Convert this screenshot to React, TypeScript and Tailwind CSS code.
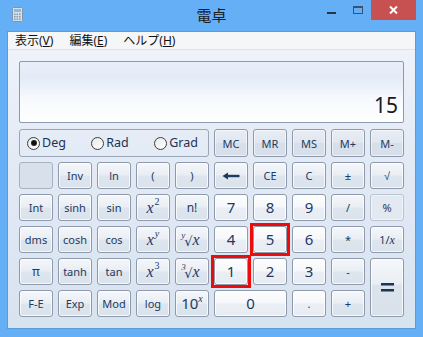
import React from 'react';

type Kind = 'fn' | 'mem' | 'num' | 'dis' | 'faded';

const kinds: Record<Kind, string> = {
  fn: "border-[#8e9aab] bg-[linear-gradient(180deg,#f4f7fa_0%,#e9eef4_48%,#dde5ee_52%,#dae2ec_100%)] shadow-[inset_0_0_0_1px_rgba(255,255,255,0.75)]",
  mem: "border-[#8e9aab] bg-[linear-gradient(180deg,#e8edf4_0%,#e0e7f0_48%,#d7e0ea_52%,#d6dfea_100%)] shadow-[inset_0_0_0_1px_rgba(255,255,255,0.55)]",
  num: "border-[#8e9aab] bg-[linear-gradient(180deg,#fdfdfe_0%,#f5f7fa_48%,#ebeff5_52%,#e7ecf2_100%)] shadow-[inset_0_0_0_1px_rgba(255,255,255,0.85)]",
  dis: "border-[#a7b1bf] bg-[#d8e1eb]",
  faded: "border-[#b9c3cf] bg-[#e3e9f1] shadow-[inset_0_0_0_1px_rgba(255,255,255,0.5)]",
};

function Btn({
  children,
  kind = 'fn',
  className = '',
  red = false,
}: {
  children?: React.ReactNode;
  kind?: Kind;
  className?: string;
  red?: boolean;
}) {
  return (
    <div
      className={`relative flex items-center justify-center rounded-[3px] border text-[#1d3a61] leading-none ${kinds[kind]} ${
        red ? 'z-10' : ''
      } ${className}`}
    >
      {children}
      {red && <div className="pointer-events-none absolute -inset-[4px] border-[3px] border-[#ee0b0b]" />}
    </div>
  );
}

const T = ({ children }: { children: React.ReactNode }) => (
  <span className="text-[11px] font-['Noto_Sans',sans-serif]">{children}</span>
);
const D = ({ children }: { children: React.ReactNode }) => (
  <span className="text-[15px] font-['Noto_Sans',sans-serif]">{children}</span>
);
const X = ({ children }: { children: React.ReactNode }) => (
  <span className="font-['Liberation_Serif',serif] italic text-[16px]">{children}</span>
);

function Pow({ base, exp, expItalic = false }: { base: React.ReactNode; exp: string; expItalic?: boolean }) {
  return (
    <span className="flex items-start">
      {base}
      <span className={`font-['Liberation_Serif',serif] text-[10px] -mt-[3px] ml-[1px] ${expItalic ? 'italic' : ''}`}>{exp}</span>
    </span>
  );
}

function Root({ idx }: { idx: string }) {
  return (
    <span className="flex items-end">
      <span className="relative font-['DejaVu_Sans',sans-serif] text-[13px]">
        <span className="absolute -left-[3px] -top-[4px] font-['Liberation_Serif',serif] italic text-[9px]">{idx}</span>
        √
      </span>
      <X>x</X>
    </span>
  );
}

function Radio({ label, checked = false }: { label: string; checked?: boolean }) {
  return (
    <div className="flex items-center gap-[2px]">
      <div className="flex h-[13px] w-[13px] items-center justify-center rounded-full border border-[#3c3c3c] bg-[linear-gradient(135deg,#e8e8e8,#ffffff)]">
        {checked && <div className="h-[6px] w-[6px] rounded-full bg-[radial-gradient(circle,#111_40%,#444_100%)]" />}
      </div>
      <span className="text-[12.5px] text-[#1d3354] font-['Noto_Sans',sans-serif]">{label}</span>
    </div>
  );
}

function CalcIcon() {
  return (
    <svg width="11" height="15" viewBox="0 0 11 15">
      <rect x="0.5" y="0.5" width="10" height="14" rx="1" fill="#d5e1ec" stroke="#7a97b5" />
      <rect x="2" y="2" width="7" height="3" fill="#8fb8dc" />
      {[0, 1, 2].map((r) =>
        [0, 1, 2].map((c) => (
          <rect key={`${r}${c}`} x={2 + c * 2.5} y={6.5 + r * 2.5} width="1.6" height="1.6" fill={c === 2 && r === 2 ? '#e08a3c' : '#8a9fb4'} />
        ))
      )}
    </svg>
  );
}

export default function App() {
  return (
    <div className="flex h-[337px] w-[423px] flex-col bg-[#64aff5] font-['Noto_Sans',sans-serif]">
      {/* title bar */}
      <div className="grid h-[31px] grid-cols-[1fr_auto_1fr]">
        <div className="flex items-start pl-[12px] pt-[7px]">
          <CalcIcon />
        </div>
        <div className="pt-[4px] text-[15px] text-[#1c1c1c] font-['Noto_Sans_CJK_JP',sans-serif]">電卓</div>
        <div className="flex items-start justify-end pr-[7px]">
          <div className="flex h-[20px] w-[26px] items-center justify-center">
            <div className="mt-[6px] h-[2px] w-[9px] bg-[#263646]" />
          </div>
          <div className="flex h-[20px] w-[27px] items-center justify-center">
            <div className="mb-[1px] h-[8px] w-[10px] border border-t-2 border-[#3b5170]" />
          </div>
          <div className="flex h-[20px] w-[45px] items-center justify-center bg-[#c75050]">
            <svg width="9" height="8" viewBox="0 0 9 8">
              <path d="M1 0.5 L8 7.5 M8 0.5 L1 7.5" stroke="#fff" strokeWidth="2" />
            </svg>
          </div>
        </div>
      </div>

      {/* client */}
      <div className="mx-[7px] mb-[8px] flex flex-1 flex-col border border-[#5a9bd9]">
        <div className="flex h-[18px] items-center gap-[16px] border-b border-[#dde2e8] bg-[#f5f6f8] pl-[7px] text-[12px] text-[#111] font-['Noto_Sans','Noto_Sans_CJK_JP',sans-serif]">
          <span>表示(<span className="underline">V</span>)</span>
          <span>編集(<span className="underline">E</span>)</span>
          <span>ヘルプ(<span className="underline">H</span>)</span>
        </div>
        <div className="flex flex-1 flex-col bg-[linear-gradient(180deg,#eef3fa_0%,#e2eaf5_40%,#d8e3f0_100%)] px-[11px] pt-[11px]">
          {/* display */}
          <div className="flex h-[62px] items-end justify-end rounded-[2px] border border-[#8d99ac] bg-[linear-gradient(180deg,#e9eff9_0%,#e3ebf7_25%,#f6f9fd_60%,#ffffff_100%)] pb-[6px] pr-[5px]">
            <span className="text-[21px] leading-none text-[#1a1a1a] font-['Noto_Sans',sans-serif]">15</span>
          </div>

          {/* keypad */}
          <div className="mt-[6px] grid grid-cols-[repeat(10,34px)] grid-rows-[28px_repeat(5,27px)] gap-x-[5px] gap-y-[5px]">
            <div className="col-span-5 flex items-center justify-between rounded-[3px] border border-[#9aa6b8] pl-[7px] pr-[10px]">
              <Radio label="Deg" checked />
              <Radio label="Rad" />
              <Radio label="Grad" />
            </div>
            <Btn kind="mem"><T>MC</T></Btn>
            <Btn kind="mem"><T>MR</T></Btn>
            <Btn kind="mem"><T>MS</T></Btn>
            <Btn kind="mem"><T>M+</T></Btn>
            <Btn kind="mem"><T>M-</T></Btn>

            {/* row 2 */}
            <Btn kind="dis" />
            <Btn><T>Inv</T></Btn>
            <Btn><T>ln</T></Btn>
            <Btn><T>(</T></Btn>
            <Btn><T>)</T></Btn>
            <Btn>
              <svg width="18" height="8" viewBox="0 0 18 8">
                <path d="M0.5 4 L6 0.5 L6 7.5 Z" fill="#1d3a61" />
                <rect x="5" y="2.8" width="12.5" height="2.4" fill="#1d3a61" />
              </svg>
            </Btn>
            <Btn><T>CE</T></Btn>
            <Btn><T>C</T></Btn>
            <Btn><T>±</T></Btn>
            <Btn><T>√</T></Btn>

            {/* row 3 */}
            <Btn><T>Int</T></Btn>
            <Btn><T>sinh</T></Btn>
            <Btn><T>sin</T></Btn>
            <Btn><Pow base={<X>x</X>} exp="2" /></Btn>
            <Btn><T><span className="text-[12px]">n!</span></T></Btn>
            <Btn kind="num"><D>7</D></Btn>
            <Btn kind="num"><D>8</D></Btn>
            <Btn kind="num"><D>9</D></Btn>
            <Btn><T>/</T></Btn>
            <Btn kind="faded"><T>%</T></Btn>

            {/* row 4 */}
            <Btn><T>dms</T></Btn>
            <Btn><T>cosh</T></Btn>
            <Btn><T>cos</T></Btn>
            <Btn><Pow base={<X>x</X>} exp="y" expItalic /></Btn>
            <Btn><Root idx="y" /></Btn>
            <Btn kind="num"><D>4</D></Btn>
            <Btn kind="num" red><D>5</D></Btn>
            <Btn kind="num"><D>6</D></Btn>
            <Btn><T>*</T></Btn>
            <Btn>
              <span className="flex items-center">
                <T>1/</T>
                <span className="font-['Liberation_Serif',serif] italic text-[12px]">x</span>
              </span>
            </Btn>

            {/* row 5 */}
            <Btn><T><span className="text-[12px]">π</span></T></Btn>
            <Btn><T>tanh</T></Btn>
            <Btn><T>tan</T></Btn>
            <Btn><Pow base={<X>x</X>} exp="3" /></Btn>
            <Btn><Root idx="3" /></Btn>
            <Btn kind="num" red><D>1</D></Btn>
            <Btn kind="num"><D>2</D></Btn>
            <Btn kind="num"><D>3</D></Btn>
            <Btn><T>-</T></Btn>
            <Btn className="row-span-2 bg-[linear-gradient(180deg,#f5f8fb_0%,#e9eef4_44%,#dbe3ed_46%,#d9e1eb_100%)]">
              <svg width="13" height="9" viewBox="0 0 13 9">
                <rect x="0" y="0" width="13" height="2.5" fill="#1d3357" />
                <rect x="0" y="6" width="13" height="2.5" fill="#1d3357" />
              </svg>
            </Btn>

            {/* row 6 */}
            <Btn><T>F-E</T></Btn>
            <Btn><T>Exp</T></Btn>
            <Btn><T>Mod</T></Btn>
            <Btn><T>log</T></Btn>
            <Btn>
              <span className="flex items-start">
                <D>10</D>
                <span className="font-['Liberation_Serif',serif] italic text-[10px] -mt-[2px]">x</span>
              </span>
            </Btn>
            <Btn kind="num" className="col-span-2"><D>0</D></Btn>
            <Btn kind="num"><T>.</T></Btn>
            <Btn><T>+</T></Btn>
          </div>
        </div>
      </div>
    </div>
  );
}
